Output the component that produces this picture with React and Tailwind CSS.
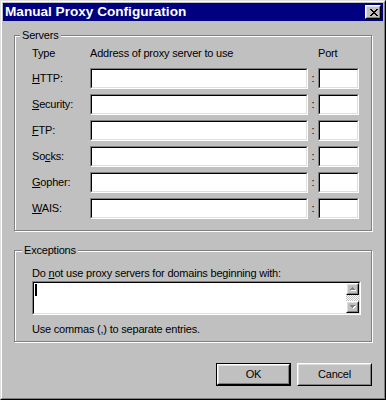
import React from "react";

function cx(...c) { return c.filter(Boolean).join(" "); }

// win95 bevels
const raisedOuter = "border border-t-white border-l-white border-r-black border-b-black";
const raisedInner = "border border-t-[#dfdfdf] border-l-[#dfdfdf] border-r-[#808080] border-b-[#808080]";

function Raised({ className = "", innerClass = "", children }) {
    return (
        <div className={cx(raisedOuter, className)}>
            <div className={cx(raisedInner, "h-full bg-[#c0c0c0]", innerClass)}>{children}</div>
        </div>
    );
}

function Field({ className = "", children }) {
    return (
        <div className={cx("border border-t-[#808080] border-l-[#808080] border-r-white border-b-white", className)}>
            <div className="h-full border border-t-black border-l-black border-r-[#dfdfdf] border-b-[#dfdfdf] bg-white flex">
                {children}
            </div>
        </div>
    );
}

function Group({ label, labelLeft, className = "", children }) {
    return (
        <div className={cx("relative border border-[#808080] shadow-[inset_1px_1px_0_#fff,1px_1px_0_#fff]", className)}>
            <span className={cx("absolute -top-[7px] bg-[#c0c0c0] px-[2px] leading-[13px]", labelLeft)}>{label}</span>
            {children}
        </div>
    );
}

function CloseGlyph() {
    return (
        <svg width="8" height="7" viewBox="0 0 8 7" shapeRendering="crispEdges" aria-hidden>
            <path
                fill="#000"
                d="M0 0h2v1H0z M6 0h2v1H6z M1 1h2v1H1z M5 1h2v1H5z M2 2h4v1H2z M3 3h2v1H3z M2 4h4v1H2z M1 5h2v1H1z M5 5h2v1H5z M0 6h2v1H0z M6 6h2v1H6z"
            />
        </svg>
    );
}

function Arrow({ down = false }) {
    const tri = down
        ? "M0 0h5v1H0z M1 1h3v1H1z M2 2h1v1H2z"
        : "M2 0h1v1H2z M1 1h3v1H1z M0 2h5v1H0z";
    return (
        <svg width="6" height="4" viewBox="0 0 6 4" shapeRendering="crispEdges" aria-hidden>
            <path fill="#fff" transform="translate(1 1)" d={tri} />
            <path fill="#808080" d={tri} />
        </svg>
    );
}

const rows = [
    { pre: "", key: "H", post: "TTP:" },
    { pre: "", key: "S", post: "ecurity:" },
    { pre: "", key: "F", post: "TP:" },
    { pre: "So", key: "c", post: "ks:" },
    { pre: "", key: "G", post: "opher:" },
    { pre: "", key: "W", post: "AIS:" },
];

export default function App() {
    return (
        <div className="w-[386px] h-[400px] border border-t-[#dfdfdf] border-l-[#dfdfdf] border-r-black border-b-black bg-[#c0c0c0] text-black text-[11px] leading-[13px] tracking-[-0.2px] font-['Liberation_Sans',Arial,sans-serif]">
            <div className="h-full border border-t-white border-l-white border-r-[#808080] border-b-[#808080] p-px">
                {/* title bar */}
                <div className="h-[18px] bg-[#000080] flex items-center justify-between pl-[2px] pr-[2px]">
                    <span className="text-white font-bold text-[13.6px] tracking-normal leading-[18px]">Manual Proxy Configuration</span>
                    <Raised className="w-[16px] h-[14px]" innerClass="flex items-center justify-center pl-px">
                        <CloseGlyph />
                    </Raised>
                </div>

                {/* servers */}
                <Group label="Servers" labelLeft="left-[5px]" className="ml-[11px] mt-[14px] w-[358px] h-[196px]">
                    <div className="pl-[17px] pt-[11px]">
                        <div className="flex h-[13px]">
                            <span className="w-[58px]">Type</span>
                            <span className="w-[228px]">Address of proxy server to use</span>
                            <span>Port</span>
                        </div>
                        <div className="mt-[8px] flex flex-col gap-[5px]">
                            {rows.map((r) => (
                                <div key={r.post} className="flex items-center h-[21px]">
                                    <span className="w-[58px]">
                                        {r.pre}<u>{r.key}</u>{r.post}
                                    </span>
                                    <Field className="w-[218px] h-[21px]" />
                                    <span className="w-[10px] text-center">:</span>
                                    <Field className="w-[41px] h-[21px]" />
                                </div>
                            ))}
                        </div>
                    </div>
                </Group>

                {/* exceptions */}
                <Group label="Exceptions" labelLeft="left-[7px]" className="ml-[11px] mt-[19px] w-[358px] h-[92px]">
                    <div className="pl-[17px] pt-[16px]">
                        <div>Do <u>n</u>ot use proxy servers for domains beginning with:</div>
                        <Field className="mt-px w-[329px] h-[34px]">
                            <div className="flex-1">
                                <div className="ml-px mt-px w-[2px] h-[12px] bg-black" />
                            </div>
                            <div className="w-[13px] flex flex-col">
                                <Raised className="h-[12px]" innerClass="flex items-center justify-center">
                                    <Arrow />
                                </Raised>
                                <div className="flex-1 bg-[repeating-conic-gradient(#c0c0c0_0_25%,#ffffff_0_50%)] bg-[length:2px_2px]" />
                                <Raised className="h-[12px]" innerClass="flex items-center justify-center">
                                    <Arrow down />
                                </Raised>
                            </div>
                        </Field>
                        <div className="mt-[8px]">Use commas (,) to separate entries.</div>
                    </div>
                </Group>

                {/* buttons */}
                <div className="ml-[11px] mt-[21px] w-[358px] flex justify-end gap-[6px]">
                    <div className="w-[75px] h-[23px] border border-black">
                        <Raised className="h-full" innerClass="flex items-center justify-center">OK</Raised>
                    </div>
                    <Raised className="w-[75px] h-[23px]" innerClass="flex items-center justify-center">Cancel</Raised>
                </div>
            </div>
        </div>
    );
}
